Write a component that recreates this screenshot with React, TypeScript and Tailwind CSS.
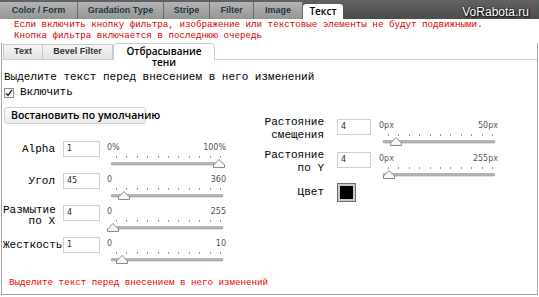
import React from 'react';

const mono = "font-['Liberation_Mono',monospace]";

const topTabs = [
  { label: 'Color / Form', w: 'w-[78px]' },
  { label: 'Gradation Type', w: 'w-[86px]' },
  { label: 'Stripe', w: 'w-[46px]' },
  { label: 'Filter', w: 'w-[44px]' },
  { label: 'Image', w: 'w-[49px]' },
];

function Slider({ min, max, thumb }: { min: string; max: string; thumb: number }) {
  const ticks = Array.from({ length: 11 }, (_, i) => Math.round(9 + i * 10.4));
  return (
    <div className="w-[119px] h-[28px] flex flex-col">
      <div className="h-[13px] flex justify-between items-center text-[8px] leading-none text-[#555] font-['DejaVu_Sans',sans-serif]">
        <span>{min}</span>
        <span>{max}</span>
      </div>
      <svg width="119" height="15" viewBox="0 0 119 15">
        {ticks.map((x) => (
          <rect key={x} x={x} y="2" width="1" height="2" fill="#9a9a9a" />
        ))}
        <rect x="4" y="8.5" width="112" height="2.5" rx="1.2" fill="#b5b5b5" stroke="#999" strokeWidth="0.6" />
        <path
          d={`M${thumb} 5.5 L${thumb + 5.5} 11 V13.5 H${thumb - 5.5} V11 Z`}
          fill="#f7f7f7"
          stroke="#8a8a8a"
          strokeWidth="1"
          strokeLinejoin="round"
        />
      </svg>
    </div>
  );
}

function Field({ value, w }: { value: string; w: string }) {
  return (
    <div className={`${w} h-[16px] shrink-0 border border-[#cfcfcf] bg-white pl-[3px] flex items-center text-[8px] text-[#1e2e44] font-['DejaVu_Sans',sans-serif]`}>
      {value}
    </div>
  );
}

function LeftRow({ label, value, min, max, thumb }: { label: React.ReactNode; value: string; min: string; max: string; thumb: number }) {
  const two = typeof label !== 'string';
  return (
    <div className="h-[32px] flex items-start">
      <div className={`w-[52px] shrink-0 text-right text-[11px] text-black ${mono} ${two ? 'leading-[11px]' : 'leading-[16px]'}`}>
        {label}
      </div>
      <div className="ml-[8px]">
        <Field value={value} w="w-[37px]" />
      </div>
      <div className="ml-[7px]">
        <Slider min={min} max={max} thumb={thumb} />
      </div>
    </div>
  );
}

function RightRow({ label, value, min, max, thumb }: { label: React.ReactNode; value: string; min: string; max: string; thumb: number }) {
  return (
    <div className="h-[33px] flex items-start">
      <div className={`w-[60px] shrink-0 -mt-[3px] text-right text-[11px] leading-[13px] text-black ${mono}`}>{label}</div>
      <div className="ml-[13px]">
        <Field value={value} w="w-[34px]" />
      </div>
      <div className="ml-[8px]">
        <Slider min={min} max={max} thumb={thumb} />
      </div>
    </div>
  );
}

export default function App() {
  return (
    <div className="relative w-[539px] h-[297px] bg-white overflow-hidden">
      {/* top tab bar */}
      <div className="h-[19px] flex items-end bg-gradient-to-b from-[#626262] to-[#4c4c4c]">
        {topTabs.map((t) => (
          <div
            key={t.label}
            className={`${t.w} h-[17px] flex items-center justify-center border-r border-[#6a6a6a] bg-gradient-to-b from-[#b3b3b3] to-[#959595] text-[9px] font-bold text-[#203844] font-['Liberation_Sans',sans-serif]`}
          >
            {t.label}
          </div>
        ))}
        <div className="w-[40px] h-[15px] rounded-t-[3px] bg-white flex items-center justify-center text-[10px] font-semibold text-black font-['Open_Sans',sans-serif]">
          Текст
        </div>
      </div>

      <div className="absolute top-[5px] right-[10px] text-[12px] leading-[14px] text-white font-['Liberation_Sans',sans-serif] [text-shadow:1px_1px_2px_#000,0_0_2px_#000]">
        VoRabota.ru
      </div>

      {/* warning */}
      <div className={`h-[24px] pl-[14px] text-[9.2px] leading-[11px] text-[#d20000] ${mono}`}>
        <div>Если включить кнопку фильтра, изображение или текстовые элементы не будут подвижными.</div>
        <div>Кнопка фильтра включается в последнюю очередь</div>
      </div>

      {/* panel */}
      <div className="ml-px w-[537px] h-[252px] border-x border-b border-[#a5a5a5] flex flex-col">
        <div className="h-[17px] border-b border-[#cfcfcf] flex items-end pl-px">
          <div className="w-[40px] h-[15px] border border-b-0 border-[#c9c9c9] bg-gradient-to-b from-[#f6f6f6] to-[#e3e3e3] flex items-center justify-center text-[9px] font-bold text-[#333] font-['Liberation_Sans',sans-serif]">
            Text
          </div>
          <div className="w-[70px] h-[15px] border border-b-0 border-l-0 border-[#c9c9c9] bg-gradient-to-b from-[#f6f6f6] to-[#e3e3e3] flex items-center justify-center text-[9px] font-bold text-[#333] font-['Liberation_Sans',sans-serif]">
            Bevel Filter
          </div>
          <div className="w-[102px] h-[17px] -mb-px border border-b-0 border-[#c9c9c9] rounded-t-[4px] bg-white pt-[2px] text-center text-[10px] leading-[11px] font-semibold text-black font-['Open_Sans',sans-serif]">
            Отбрасывание
            <br />
            тени
          </div>
        </div>

        <div className="pl-px flex flex-col">
          <div className={`mt-[11px] pl-[1px] text-[11px] leading-[13px] text-black ${mono}`}>
            Выделите текст перед внесением в него изменений
          </div>
          <div className="mt-[3px] h-[11px] flex items-center">
            <div className="ml-[1px] w-[10px] h-[10px] border border-[#8e8e8e] bg-white flex items-center justify-center">
              <svg width="8" height="8" viewBox="0 0 8 8">
                <path d="M1 4.2 L3 6.4 L7 0.8" fill="none" stroke="#222" strokeWidth="1.3" />
              </svg>
            </div>
            <span className={`ml-[6px] text-[11px] text-black ${mono}`}>Включить</span>
          </div>

          <div className="mt-[9px] flex items-start">
            <div className="flex flex-col">
              <div className="ml-[1px] w-[142px] h-[17px] rounded-[3px] border border-[#d2d2d2] bg-gradient-to-b from-white to-[#ebebeb] pl-[6px] flex items-center text-[10.5px] font-semibold text-black font-['Open_Sans',sans-serif] whitespace-nowrap">
                Востановить по умолчанию
              </div>
              <div className="mt-[17px]">
                <LeftRow label="Alpha" value="1" min="0%" max="100%" thumb={112} />
                <LeftRow label="Угол" value="45" min="0" max="360" thumb={17} />
                <LeftRow label={<>Размытие<br />по X</>} value="4" min="0" max="255" thumb={6} />
                <LeftRow label="Жесткость" value="1" min="0" max="10" thumb={15} />
              </div>
            </div>

            <div className="ml-[38px] pt-[12px] flex flex-col">
              <RightRow label={<>Растояние<br />смещения</>} value="4" min="0px" max="50px" thumb={17} />
              <RightRow label={<>Растояние<br />по Y</>} value="4" min="0px" max="255px" thumb={10} />
              <div className="-mt-[2px] flex items-center">
                <div className={`w-[60px] text-right text-[11px] text-black ${mono}`}>Цвет</div>
                <div className="ml-[13px] w-[19px] h-[19px] border border-[#6f6f6f] bg-[#c8c8c8] p-[2px]">
                  <div className="w-full h-full bg-black" />
                </div>
              </div>
            </div>
          </div>

          <div className={`mt-[8px] pl-[6px] text-[9.2px] leading-[12px] text-[#ee0000] ${mono}`}>
            Выделите текст перед внесением в него изменений
          </div>
        </div>
      </div>
    </div>
  );
}
